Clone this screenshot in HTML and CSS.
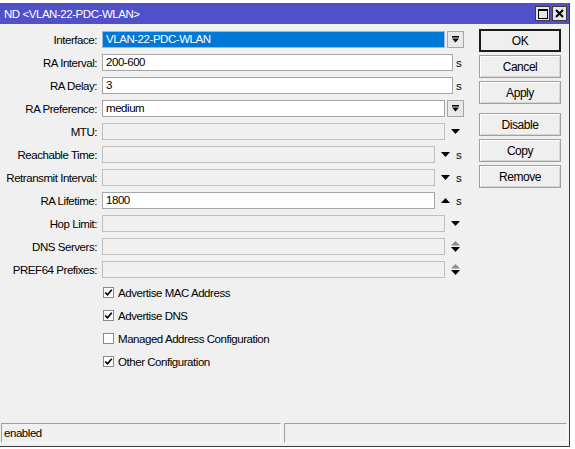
FILE: index.html
```html
<!DOCTYPE html>
<html lang="en">
<head>
    <meta charset="UTF-8">
    <title>ND &lt;VLAN-22-PDC-WLAN&gt;</title>
    <link rel="stylesheet" href="styles.css">
</head>
<body>
    <div class="window">
        <div class="titlebar">
            <span class="title">ND &lt;VLAN-22-PDC-WLAN&gt;</span>
            <div class="title-btns">
                <span class="tbtn">
                    <svg width="10" height="10" viewBox="0 0 10 10"><rect x="0.5" y="0.5" width="9" height="9" fill="none" stroke="#000"/><rect x="0" y="0" width="10" height="2" fill="#000"/></svg>
                </span>
                <span class="tbtn">
                    <svg width="9" height="9" viewBox="0 0 9 9"><path d="M1 1 L8 8 M8 1 L1 8" stroke="#000" stroke-width="2"/></svg>
                </span>
            </div>
        </div>

        <div class="content">
            <div class="form">
                <div class="row">
                    <label class="label">Interface:</label>
                    <div class="input sel selected">VLAN-22-PDC-WLAN</div>
                    <span class="dd-btn"><svg width="7" height="7" viewBox="0 0 7 7"><rect x="0" y="0" width="7" height="1.5" fill="#000"/><polygon points="0,2.5 7,2.5 3.5,6.5" fill="#000"/></svg></span>
                </div>
                <div class="row">
                    <label class="label">RA Interval:</label>
                    <div class="input wide">200-600</div>
                    <span class="unit">s</span>
                </div>
                <div class="row">
                    <label class="label">RA Delay:</label>
                    <div class="input wide">3</div>
                    <span class="unit">s</span>
                </div>
                <div class="row">
                    <label class="label">RA Preference:</label>
                    <div class="input sel">medium</div>
                    <span class="dd-btn"><svg width="7" height="7" viewBox="0 0 7 7"><rect x="0" y="0" width="7" height="1.5" fill="#000"/><polygon points="0,2.5 7,2.5 3.5,6.5" fill="#000"/></svg></span>
                </div>
                <div class="row">
                    <label class="label">MTU:</label>
                    <div class="input sel off"></div>
                    <span class="spin"><svg width="9" height="5" viewBox="0 0 9 5"><polygon points="0,0 9,0 4.5,5" fill="#000"/></svg></span>
                </div>
                <div class="row">
                    <label class="label">Reachable Time:</label>
                    <div class="input short off"></div>
                    <span class="spin"><svg width="9" height="5" viewBox="0 0 9 5"><polygon points="0,0 9,0 4.5,5" fill="#000"/></svg></span>
                    <span class="unit tight">s</span>
                </div>
                <div class="row">
                    <label class="label">Retransmit Interval:</label>
                    <div class="input short off"></div>
                    <span class="spin"><svg width="9" height="5" viewBox="0 0 9 5"><polygon points="0,0 9,0 4.5,5" fill="#000"/></svg></span>
                    <span class="unit tight">s</span>
                </div>
                <div class="row">
                    <label class="label">RA Lifetime:</label>
                    <div class="input short">1800</div>
                    <span class="spin"><svg width="9" height="5" viewBox="0 0 9 5"><polygon points="0,5 9,5 4.5,0" fill="#000"/></svg></span>
                    <span class="unit tight">s</span>
                </div>
                <div class="row">
                    <label class="label">Hop Limit:</label>
                    <div class="input sel off"></div>
                    <span class="spin"><svg width="9" height="5" viewBox="0 0 9 5"><polygon points="0,0 9,0 4.5,5" fill="#000"/></svg></span>
                </div>
                <div class="row">
                    <label class="label">DNS Servers:</label>
                    <div class="input sel off"></div>
                    <span class="spin"><svg width="9" height="11" viewBox="0 0 9 11"><polygon points="0,4.5 9,4.5 4.5,0" fill="#8c8c8c"/><polygon points="0,6 9,6 4.5,11" fill="#000"/></svg></span>
                </div>
                <div class="row">
                    <label class="label">PREF64 Prefixes:</label>
                    <div class="input sel off"></div>
                    <span class="spin"><svg width="9" height="11" viewBox="0 0 9 11"><polygon points="0,4.5 9,4.5 4.5,0" fill="#8c8c8c"/><polygon points="0,6 9,6 4.5,11" fill="#000"/></svg></span>
                </div>

                <div class="checks">
                    <div class="check">
                        <span class="box"><svg width="9" height="9" viewBox="0 0 9 9"><path d="M1.2 4.5 L3.5 6.8 L7.8 1.8" fill="none" stroke="#000" stroke-width="1.7"/></svg></span>
                        <span>Advertise MAC Address</span>
                    </div>
                    <div class="check">
                        <span class="box"><svg width="9" height="9" viewBox="0 0 9 9"><path d="M1.2 4.5 L3.5 6.8 L7.8 1.8" fill="none" stroke="#000" stroke-width="1.7"/></svg></span>
                        <span>Advertise DNS</span>
                    </div>
                    <div class="check">
                        <span class="box"></span>
                        <span>Managed Address Configuration</span>
                    </div>
                    <div class="check">
                        <span class="box"><svg width="9" height="9" viewBox="0 0 9 9"><path d="M1.2 4.5 L3.5 6.8 L7.8 1.8" fill="none" stroke="#000" stroke-width="1.7"/></svg></span>
                        <span>Other Configuration</span>
                    </div>
                </div>
            </div>

            <div class="buttons">
                <button class="btn default">OK</button>
                <button class="btn">Cancel</button>
                <button class="btn">Apply</button>
                <button class="btn group">Disable</button>
                <button class="btn">Copy</button>
                <button class="btn">Remove</button>
            </div>
        </div>

        <div class="statusbar">
            <div class="panel left">enabled</div>
            <div class="panel right"></div>
        </div>
    </div>
</body>
</html>
```

FILE: styles.css
```css
body {
    margin: 0;
    background-color: #fff;
    font-family: "Liberation Sans", Arial, sans-serif;
    font-size: 11.5px;
    letter-spacing: -0.45px;
    color: #000;
}
.window {
    width: 569px;
    height: 443px;
    margin-top: 3px;
    background-color: #f0f0f0;
    border-right: 1px solid #3a3a3a;
    border-bottom: 1px solid #3a3a3a;
    display: flex;
    flex-direction: column;
}
.titlebar {
    height: 21px;
    background-color: #5050c8;
    display: flex;
    align-items: center;
    justify-content: space-between;
    padding-left: 4px;
    padding-right: 2px;
}
.title {
    color: #fff;
    font-size: 11.5px;
}
.title-btns {
    display: flex;
    gap: 2px;
}
.tbtn {
    width: 13px;
    height: 13px;
    border: 1px solid #3a3a3a;
    background-color: #e6e6e6;
    display: flex;
    align-items: center;
    justify-content: center;
}
.content {
    flex: 1;
    display: flex;
}
.form {
    width: 479px;
    padding-top: 7px;
}
.row {
    display: flex;
    align-items: center;
    height: 17px;
    margin-bottom: 6px;
}
.label {
    width: 97px;
    margin-right: 5px;
    text-align: right;
    flex: none;
    white-space: nowrap;
}
.input {
    height: 17px;
    box-sizing: border-box;
    border: 1px solid #a6a6a6;
    background-color: #fff;
    padding-left: 3px;
    line-height: 15px;
    flex: none;
    white-space: nowrap;
}
.input.sel {
    width: 343px;
}
.input.wide {
    width: 351px;
}
.input.short {
    width: 333px;
}
.input.off {
    background-color: #f0f0f0;
    border-color: #bfbfbf;
}
.input.selected {
    background-color: #0078d7;
    color: #fff;
    border-color: #9ab8d8;
}
.dd-btn {
    width: 17px;
    height: 17px;
    box-sizing: border-box;
    margin-left: 2px;
    border: 1px solid #a6a6a6;
    background-color: #e9e9e9;
    display: flex;
    align-items: center;
    justify-content: center;
}
.unit {
    margin-left: 3px;
}
.unit.tight {
    margin-left: 0;
}
.spin {
    width: 21px;
    height: 17px;
    display: flex;
    align-items: center;
    justify-content: center;
    flex: none;
}
.checks {
    padding-left: 103px;
}
.check {
    display: flex;
    align-items: center;
    height: 17px;
    margin-bottom: 6px;
}
.box {
    width: 11px;
    height: 11px;
    box-sizing: border-box;
    border: 1px solid #8a8a8a;
    background-color: #fff;
    margin-right: 4px;
    display: flex;
    align-items: center;
    justify-content: center;
}
.buttons {
    width: 82px;
    padding-top: 5px;
    display: flex;
    flex-direction: column;
    gap: 3px;
}
.btn {
    height: 23px;
    width: 82px;
    font-family: inherit;
    font-size: 12px;
    letter-spacing: -0.45px;
    color: #000;
    background-color: #efefef;
    border: 1px solid #a0a0a0;
    box-shadow: inset 1px 1px 0 #fff, inset -1px -1px 0 #d6d6d6;
    padding: 0;
}
.btn.default {
    border: 2px solid #1a1a1a;
    box-shadow: none;
}
.btn.group {
    margin-top: 6px;
}
.statusbar {
    display: flex;
    gap: 3px;
    padding: 0 2px 3px 1px;
}
.panel {
    height: 20px;
    box-sizing: border-box;
    border-top: 1px solid #a0a0a0;
    border-left: 1px solid #a0a0a0;
    border-right: 1px solid #fafafa;
    border-bottom: 1px solid #fafafa;
    padding-left: 2px;
    line-height: 18px;
}
.panel.left {
    width: 280px;
}
.panel.right {
    flex: 1;
}
```
